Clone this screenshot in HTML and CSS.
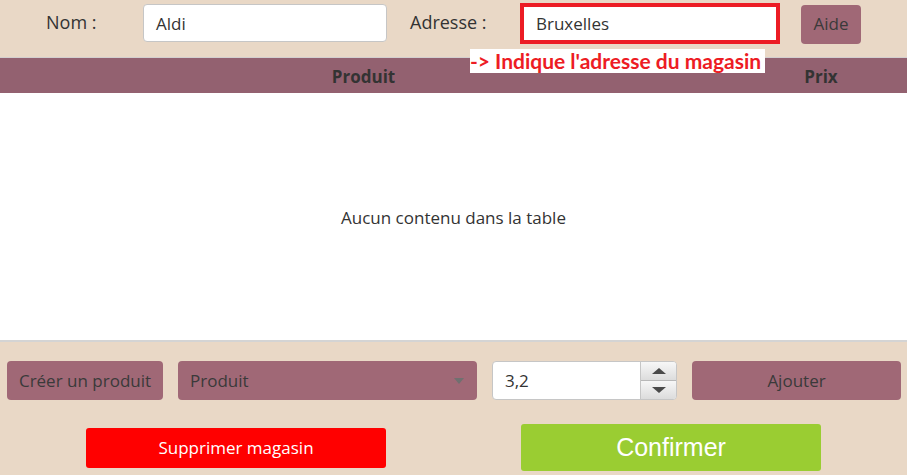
FILE: index.html
```html
<!DOCTYPE html>
<html lang="fr">
<head>
<meta charset="utf-8">
<link rel="stylesheet" href="styles.css">
</head>
<body>
<div class="page">
  <div class="top">
    <span class="label label-nom">Nom :</span>
    <div class="field field-nom">Aldi</div>
    <span class="label label-adr">Adresse :</span>
    <div class="field field-adr">Bruxelles</div>
    <button class="btn btn-aide">Aide</button>
  </div>
  <div class="table">
    <div class="thead">
      <div class="th th-produit">Produit</div>
      <div class="th th-prix">Prix</div>
    </div>
    <div class="tbody">Aucun contenu dans la table</div>
    <div class="hint">-&gt; Indique l'adresse du magasin</div>
  </div>
  <div class="controls">
    <button class="btn btn-creer">Créer un produit</button>
    <div class="select">
      <span>Produit</span>
      <span class="caret"></span>
    </div>
    <div class="spinner">
      <div class="spin-value">3,2</div>
      <div class="spin-btns">
        <div class="spin-btn"><span class="tri-up"></span></div>
        <div class="spin-btn"><span class="tri-down"></span></div>
      </div>
    </div>
    <button class="btn btn-ajouter">Ajouter</button>
  </div>
  <div class="actions">
    <button class="btn-del">Supprimer magasin</button>
    <button class="btn-ok">Confirmer</button>
  </div>
</div>
</body>
</html>
```

FILE: styles.css
```css
html, body {
  margin: 0;
  padding: 0;
}
body {
  background: #e9d8c6;
  font-family: "Open Sans", "Noto Sans", sans-serif;
  color: #333333;
  width: 907px;
  height: 475px;
  overflow: hidden;
}
.page {
  display: flex;
  flex-direction: column;
}
.top {
  height: 57px;
  display: flex;
  align-items: flex-start;
}
.label {
  font-size: 18px;
  line-height: 24px;
  margin-top: 10px;
  color: #333333;
}
.label-nom {
  margin-left: 46px;
  width: 97px;
}
.field {
  box-sizing: border-box;
  background: #ffffff;
  font-size: 17px;
  display: flex;
  align-items: center;
  color: #333333;
}
.field-nom {
  width: 244px;
  height: 38px;
  border: 1px solid #c6c6c6;
  border-radius: 4px;
  padding-left: 12px;
  margin-top: 4px;
}
.label-adr {
  margin-left: 23px;
  width: 110px;
}
.field-adr {
  width: 260px;
  height: 41px;
  border: 4px solid #ec1c24;
  padding-left: 12px;
  margin-top: 3px;
}
.btn {
  box-sizing: border-box;
  background: #a06876;
  border: none;
  border-radius: 4px;
  color: #3a3a3a;
  font-family: "Open Sans", "Noto Sans", sans-serif;
  font-size: 17px;
  padding: 0;
}
.btn-aide {
  margin-left: 21px;
  width: 60px;
  height: 39px;
  margin-top: 5px;
  padding-bottom: 2px;
}
.table {
  position: relative;
  display: flex;
  flex-direction: column;
}
.thead {
  height: 36px;
  background: #936170;
  border-top: 1px solid #d3cfcf;
  display: flex;
  align-items: center;
  font-weight: bold;
  font-size: 17px;
  color: #333333;
  padding-top: 1px;
  box-sizing: border-box;
}
.th-produit {
  width: 727px;
  text-align: center;
}
.th-prix {
  flex: 1;
  padding-left: 8px;
  text-align: center;
}
.tbody {
  height: 249px;
  background: #ffffff;
  border-bottom: 2px solid #d4d4d4;
  display: flex;
  align-items: center;
  justify-content: center;
  font-size: 17px;
  color: #333333;
  padding-top: 2px;
  box-sizing: border-box;
}
.hint {
  position: absolute;
  left: 470px;
  top: -8px;
  width: 295px;
  height: 24px;
  background: #ffffff;
  color: #ed1c24;
  font-family: "Lato", "Open Sans", sans-serif;
  font-weight: bold;
  font-size: 21px;
  line-height: 24px;
  white-space: nowrap;
  overflow: hidden;
}
.controls {
  display: flex;
  align-items: center;
  margin-top: 19px;
  height: 39px;
}
.btn-creer {
  margin-left: 7px;
  width: 156px;
  height: 39px;
}
.select {
  box-sizing: border-box;
  margin-left: 15px;
  width: 299px;
  height: 39px;
  background: #a06876;
  border-radius: 4px;
  display: flex;
  align-items: center;
  justify-content: space-between;
  padding: 0 13px 0 12px;
  font-size: 17px;
  color: #3a3a3a;
}
.caret {
  width: 0;
  height: 0;
  border-left: 5px solid transparent;
  border-right: 5px solid transparent;
  border-top: 6px solid #707070;
}
.spinner {
  box-sizing: border-box;
  margin-left: 15px;
  width: 185px;
  height: 39px;
  border: 1px solid #c6c6c6;
  border-radius: 4px;
  background: #ffffff;
  display: flex;
  overflow: hidden;
}
.spin-value {
  flex: 1;
  display: flex;
  align-items: center;
  padding-left: 12px;
  font-size: 17px;
  color: #333333;
}
.spin-btns {
  width: 35px;
  display: flex;
  flex-direction: column;
  border-left: 1px solid #c6c6c6;
}
.spin-btn {
  flex: 1;
  display: flex;
  align-items: center;
  justify-content: center;
  background: linear-gradient(#f7f7f7, #dcdcdc);
}
.spin-btn + .spin-btn {
  border-top: 1px solid #b8b8b8;
}
.tri-up {
  width: 0;
  height: 0;
  border-left: 7px solid transparent;
  border-right: 7px solid transparent;
  border-bottom: 6px solid #4a4a4a;
}
.tri-down {
  width: 0;
  height: 0;
  border-left: 7px solid transparent;
  border-right: 7px solid transparent;
  border-top: 6px solid #4a4a4a;
}
.btn-ajouter {
  margin-left: 15px;
  width: 209px;
  height: 39px;
}
.actions {
  display: flex;
  align-items: center;
  margin-top: 24px;
  height: 47px;
}
.btn-del {
  margin-left: 86px;
  width: 300px;
  height: 40px;
  border: none;
  border-radius: 3px;
  background: #ff0000;
  color: #ffffff;
  font-family: "Open Sans", "Noto Sans", sans-serif;
  font-size: 17px;
  padding: 0;
}
.btn-ok {
  margin-left: 135px;
  width: 300px;
  height: 47px;
  border: none;
  border-radius: 3px;
  background: #9acd32;
  color: #ffffff;
  font-family: "Liberation Sans", Arial, sans-serif;
  font-size: 25px;
  padding: 0;
}
```
